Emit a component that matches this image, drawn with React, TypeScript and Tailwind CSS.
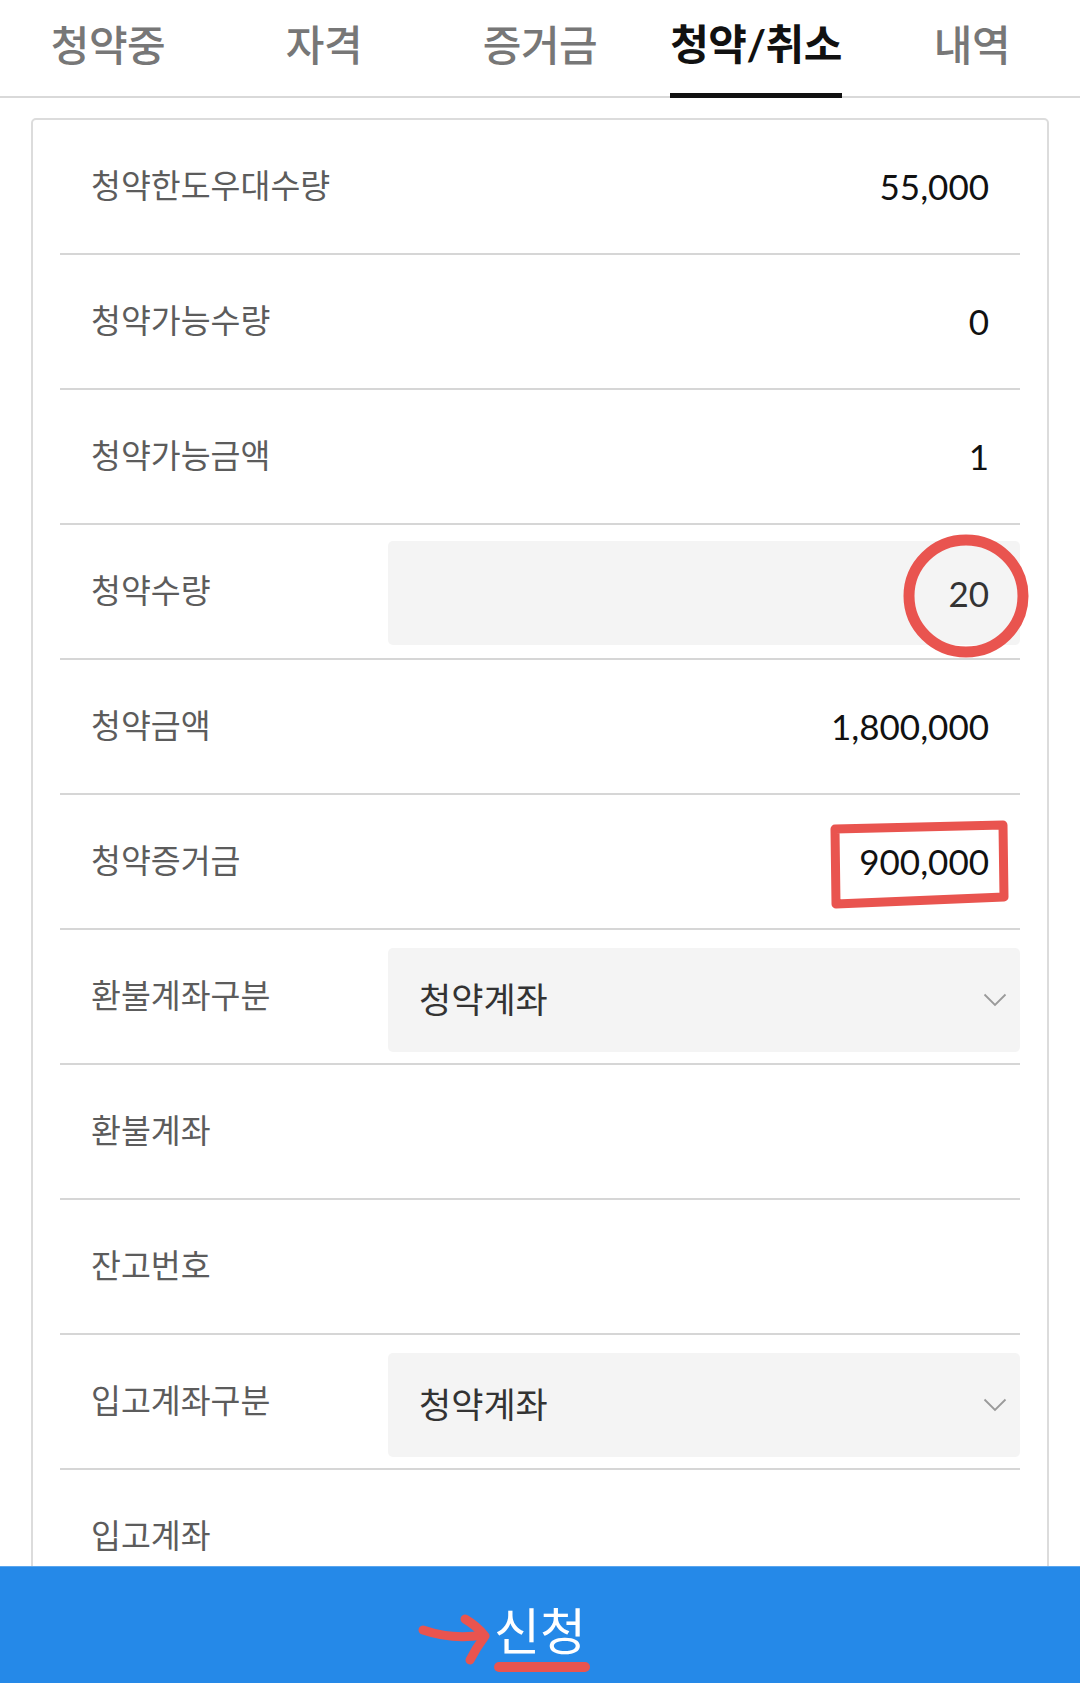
import React from "react";

const tabs = ["청약중", "자격", "증거금", "청약/취소", "내역"];

type Row =
  | { label: string; kind: "text"; value?: string }
  | { label: string; kind: "input"; value: string }
  | { label: string; kind: "select"; value: string };

const rows: Row[] = [
  { label: "청약한도우대수량", kind: "text", value: "55,000" },
  { label: "청약가능수량", kind: "text", value: "0" },
  { label: "청약가능금액", kind: "text", value: "1" },
  { label: "청약수량", kind: "input", value: "20" },
  { label: "청약금액", kind: "text", value: "1,800,000" },
  { label: "청약증거금", kind: "text", value: "900,000" },
  { label: "환불계좌구분", kind: "select", value: "청약계좌" },
  { label: "환불계좌", kind: "text" },
  { label: "잔고번호", kind: "text" },
  { label: "입고계좌구분", kind: "select", value: "청약계좌" },
  { label: "입고계좌", kind: "text" },
];

const font = { fontFamily: 'Lato, "Noto Sans CJK KR", sans-serif' };

export default function App() {
  return (
    <div className="relative w-[1080px] h-[1683px] overflow-hidden bg-white" style={font}>
      {/* Tabs */}
      <div className="flex h-[98px] border-b-2 border-[#d9d9d9]">
        {tabs.map((t, i) => {
          const active = i === 3;
          return (
            <div key={t} className="flex-1 flex justify-center">
              {active ? (
                <span className="h-[98px] flex items-center pb-[4px] border-b-[5px] border-[#111] text-[42px] font-bold text-[#111] tracking-[-0.5px]">
                  {t}
                </span>
              ) : (
                <span className="h-[96px] flex items-center pb-[6px] text-[42px] font-medium text-[#777] tracking-[-0.5px]">
                  {t}
                </span>
              )}
            </div>
          );
        })}
      </div>

      {/* Card */}
      <div className="ml-[31px] mt-[20px] w-[1018px] border-2 border-[#dcdcdc] rounded-[5px] px-[27px]">
        {rows.map((r) => (
          <div key={r.label} className="flex items-center h-[135px] border-b-2 border-[#d6d6d6]">
            <div className="w-[328px] shrink-0 pl-[31px] text-[32.5px] text-[#5c5c5c]">{r.label}</div>
            {r.kind === "text" && (
              <div className="flex-1 text-right pr-[31px] text-[35px] text-[#111]">{r.value ?? ""}</div>
            )}
            {r.kind === "input" && (
              <div className="flex-1 h-[104px] mt-[3px] rounded-[5px] bg-[#f4f4f4] flex items-center justify-end pr-[31px] text-[35px] text-[#333]">
                {r.value}
              </div>
            )}
            {r.kind === "select" && (
              <div className="flex-1 h-[104px] mt-[6px] rounded-[5px] bg-[#f4f4f4] flex items-center justify-between pl-[31px] pr-[13px] text-[35px] text-[#333]">
                <span>{r.value}</span>
                <svg width="24" height="14" viewBox="0 0 24 14" fill="none">
                  <path d="M1.5 1.5 L12 12 L22.5 1.5" stroke="#9a9a9a" strokeWidth="1.8" />
                </svg>
              </div>
            )}
          </div>
        ))}
        <div className="h-[200px]" />
      </div>

      {/* Bottom button */}
      <div className="absolute left-0 bottom-0 w-full h-[117px] bg-[#2589e8] border-t border-[#5aa6ee] flex items-center justify-center">
        <span className="text-[50px] text-white pt-[12px]">신청</span>
      </div>

      {/* Red annotations */}
      <svg className="absolute left-0 top-0 pointer-events-none" width="1080" height="1683" viewBox="0 0 1080 1683" fill="none">
        <ellipse cx="966" cy="596" rx="57" ry="56" stroke="#e9544f" strokeWidth="11" />
        <path d="M835 829 L1003 825 L1004 897 L836 904 Z" stroke="#e9544f" strokeWidth="9" strokeLinejoin="round" />
        <path d="M423 1630 Q452 1640 483 1635" stroke="#e9544f" strokeWidth="9" strokeLinecap="round" />
        <path d="M465 1619 Q477 1626 485 1636 Q476 1648 470 1660" stroke="#e9544f" strokeWidth="9" strokeLinecap="round" strokeLinejoin="round" />
        <path d="M499 1667 L585 1667" stroke="#e9544f" strokeWidth="10" strokeLinecap="round" />
      </svg>
    </div>
  );
}
